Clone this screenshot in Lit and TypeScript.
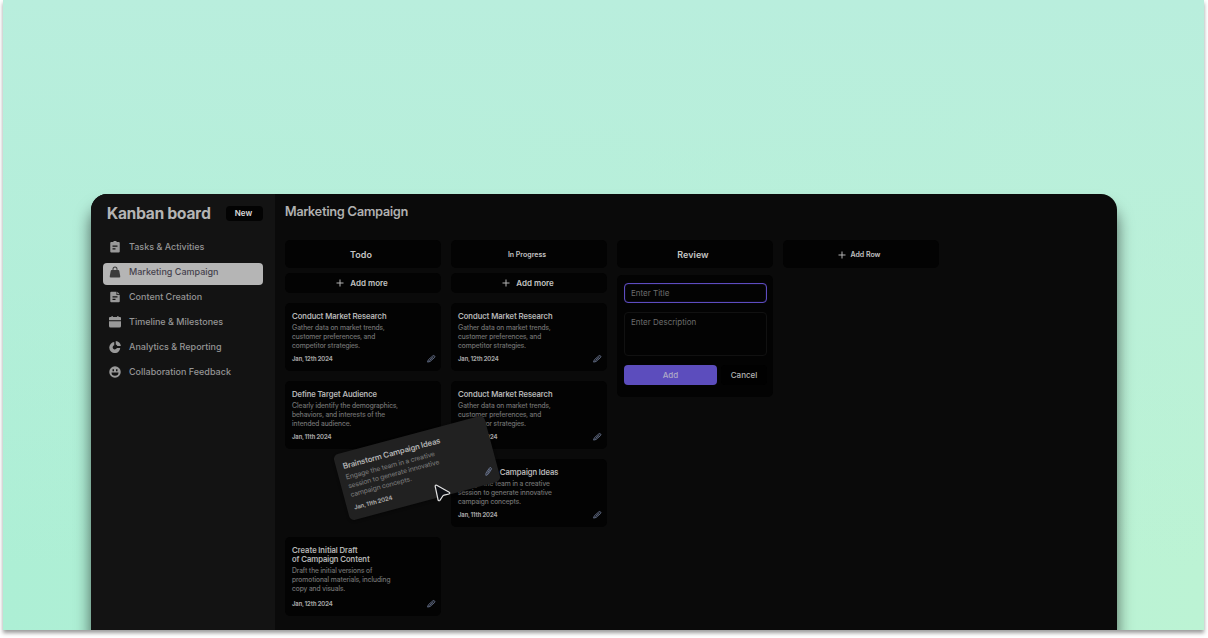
import { LitElement, html, css, svg, nothing } from "lit";
import { customElement, property } from "lit/decorators.js";

type Card = { title: string[]; body: string[]; date: string; edit?: boolean; tall?: boolean };

const research: Card = {
  title: ["Conduct Market Research"],
  body: ["Gather data on market trends,", "customer preferences, and", "competitor strategies."],
  date: "Jan, 12th 2024",
  edit: true,
};
const audience: Card = {
  title: ["Define Target Audience"],
  body: ["Clearly identify the demographics,", "behaviors, and interests of the", "intended audience."],
  date: "Jan, 11th 2024",
};
const brainstorm: Card = {
  title: ["Brainstorm Campaign Ideas"],
  body: ["Engage the team in a creative", "session to generate innovative", "campaign concepts."],
  date: "Jan, 11th 2024",
  edit: true,
};
const draft: Card = {
  title: ["Create Initial Draft", "of Campaign Content"],
  body: ["Draft the initial versions of", "promotional materials, including", "copy and visuals."],
  date: "Jan, 12th 2024",
  edit: true,
  tall: true,
};

const icons = {
  tasks: svg`<path fill-rule="evenodd" d="M9 0h6v2h4.500a2 2 0 0 1 2 2v17a2 2 0 0 1-2 2h-15a2 2 0 0 1-2-2V4a2 2 0 0 1 2-2H9zM7 9v2.400h10V9zM7 14.500v2.400h6v-2.400z"/>`,
  bag: svg`<path fill-rule="evenodd" d="M7 8V6a5 5 0 0 1 10 0v2h1.500a2 2 0 0 1 2 1.600l2 11a2 2 0 0 1-2 2.400h-17a2 2 0 0 1-2-2.400l2-11A2 2 0 0 1 5.500 8zm2 0h6V6a3 3 0 0 0-6 0z"/>`,
  doc: svg`<path fill-rule="evenodd" d="M4.500 1.500H15V8h6.500v12.500a2 2 0 0 1-2 2h-15a2 2 0 0 1-2-2v-17a2 2 0 0 1 2-2zM7 10.500v2.300h10v-2.300zM7 15.500v2.300h6v-2.300zM16.500 1.500l5 5h-5z"/>`,
  calendar: svg`<path d="M5 0h2.500v2h9V0H19v2h3a2 2 0 0 1 2 2v4.500H0V4a2 2 0 0 1 2-2h3zM0 10.500h24V20a3 3 0 0 1-3 3H3a3 3 0 0 1-3-3z"/>`,
  pie: svg`<path d="M10.500 2.200V8.500a4.200 4.200 0 1 0 5 5.500h7A11 11 0 1 1 10.500 2.200zM13.500 0c5.500.3 9.700 4.500 10.200 10h-7A5 5 0 0 0 13.500 7z"/>`,
  smile: svg`<path fill-rule="evenodd" d="M12 .5a11.500 11.500 0 1 1 0 23 11.500 11.500 0 0 1 0-23zM7 6.500v4h3v-4zM14 6.500v4h3v-4zM5 13a7 6.500 0 0 0 14 0z"/>`,
};

const pencil = svg`<path d="M1.500 21.500l2-6L15.500 5a3.200 3.200 0 0 1 4.500 0 3.200 3.200 0 0 1 0 4.500L8 20zM6.500 17.500l11-10"/>`;

const plus = html`<svg class="plus" viewBox="0 0 8 8" aria-hidden="true"><path d="M4 .5v7M.5 4h7" /></svg>`;

@customElement("kanban-card")
class KanbanCard extends LitElement {
  @property({ attribute: false }) card!: Card;
  @property({ type: Boolean, reflect: true }) dragging = false;

  static styles = css`
    :host { display: block; }
    .card {
      box-sizing: border-box;
      display: flex;
      flex-direction: column;
      min-height: 68px;
      padding: 9px 7px 8px;
      border-radius: 5px;
      background: #030303;
      color: #b4b4b4;
    }
    .tall { min-height: 79px; }
    :host([dragging]) .card { background: #212121; box-shadow: 0 1px 3px #0006; }
    h3 { margin: 0; font-size: 8px; line-height: 9px; font-weight: 600; }
    p { margin: 2px 0 0; font-size: 7px; line-height: 9px; font-weight: 500; color: #727272; }
    span { display: block; white-space: nowrap; }
    .foot { display: flex; justify-content: space-between; align-items: center; margin-top: auto; height: 9px; }
    time { font-size: 6px; line-height: 8px; font-weight: 700; color: #a4a4a4; }
    button { display: flex; margin: 0 -2px 0 0; padding: 0; border: 0; background: none; }
    svg { width: 9px; height: 9px; fill: none; stroke: #69748f; stroke-width: 2.400; stroke-linejoin: round; }
  `;

  render() {
    const { title, body, date, edit, tall } = this.card;
    return html`<article class="card ${tall ? "tall" : ""}">
      <h3>${title.map((t) => html`<span>${t}</span>`)}</h3>
      <p>${body.map((t) => html`<span>${t}</span>`)}</p>
      <div class="foot">
        <time>${date}</time>
        ${edit ? html`<button aria-label="Edit"><svg viewBox="0 0 24 24">${pencil}</svg></button>` : nothing}
      </div>
    </article>`;
  }
}

@customElement("app-root")
class AppRoot extends LitElement {
  static styles = css`
    :host {
      display: flex;
      box-sizing: border-box;
      height: 100vh;
      padding: 0 4px 8px 3px;
      background: #fff;
      font-family: Inter, "Liberation Sans", sans-serif;
      overflow: hidden;
    }
    h1, h2, kanban-card { font-family: "Inter Display", Inter, sans-serif; }
    button, input, textarea { font-family: inherit; }
    .frame { flex: 1; display: flex; box-shadow: 0 3px 4px #0006; }
    .stage {
      flex: 1;
      display: flex;
      box-sizing: border-box;
      padding: 194px 87px 0 88px;
      overflow: hidden;
      background:
        linear-gradient(180deg, #b9eedd 0%, #b9eedd00 90%),
        linear-gradient(90deg, #adefd5 0%, #bcf3d4 100%);
    }
    .window {
      flex: 1;
      display: flex;
      border-radius: 16px 16px 0 0;
      background: #0a0a0a;
      box-shadow: 0 14px 16px #0009;
      overflow: hidden;
    }
    .sidebar { flex: 0 0 184px; box-sizing: border-box; padding: 9px 12px; background: #131313; }
    .brand { display: flex; align-items: center; justify-content: space-between; padding: 0 0 0 4px; }
    h1 { margin: 0; font-size: 16px; line-height: 20px; font-weight: 700; color: #b4b4b4; }
    .new {
      width: 37px; height: 15px; padding: 0 2px 0 0; border: 0; border-radius: 4px;
      background: #030303; color: #ddd; font-size: 8px; font-weight: 600;
    }
    nav { display: grid; gap: 3px; margin-top: 15px; }
    nav a {
      display: flex; align-items: center; gap: 8px; box-sizing: border-box; height: 22px;
      padding: 0 6px 4px; border-radius: 4px; color: #959595; text-decoration: none;
      font-size: 9px; line-height: 12px; font-weight: 500; white-space: nowrap;
    }
    nav a.active { background: #b5b5b5; color: #45424d; }
    nav svg { width: 12px; height: 12px; fill: #999; }
    nav .active svg { fill: #3c3c3c; }
    main { flex: 1; min-width: 0; padding: 9px 10px; }
    h2 { margin: 0; font-size: 13px; line-height: 17px; font-weight: 600; color: #b0b0b0; }
    .board { display: grid; grid-template-columns: repeat(4, 156px); gap: 10px; align-items: start; margin-top: 20px; }
    .head, .more {
      display: flex; align-items: center; justify-content: center; width: 100%; box-sizing: border-box;
      border: 0; border-radius: 5px; background: #030303; color: #c4c4c4; font-weight: 600;
    }
    .head { height: 28px; margin: 0; padding: 2px 4px 0 0; font-size: 9px; line-height: 12px; }
    .small { font-size: 7px; gap: 5px; }
    .more { height: 20px; margin: 5px 0 10px; padding: 0 2px 0 0; gap: 6px; font-size: 8px; }
    .plus { width: 8px; height: 8px; fill: none; stroke: #b4b4b4; stroke-width: 1; }
    .cards { display: grid; gap: 10px; }
    .slot { position: relative; height: 68px; }
    .dragged { position: absolute; z-index: 2; left: 54px; top: -25px; width: 156px; transform: rotate(-15deg); }
    .cursor {
      position: absolute; z-index: 3; left: 149px; top: 25px; width: 17px; height: 18px;
      fill: #0d0f14; stroke: #e2e2e2; stroke-width: 1.200; stroke-linejoin: round;
    }
    form {
      display: grid; grid-template-columns: 1fr 46px; gap: 9px 4px; margin-top: 7px;
      padding: 8px 6px 12px 7px; border-radius: 5px; background: #030303;
    }
    input, textarea {
      grid-column: 1 / -1; box-sizing: border-box; width: 100%; margin: 0; padding: 0 6px; outline: 0;
      border: 1px solid #111; border-radius: 4px; background: #030303; color: #ccc; font-size: 8px; line-height: 12px;
    }
    input { height: 20px; border-color: #5d4cc0; box-shadow: inset 0 0 1px #5d4cc0; }
    textarea { display: block; height: 44px; padding-top: 3px; resize: none; }
    ::placeholder { color: #6c6c6c; opacity: 1; }
    form button { height: 20px; padding: 0; border: 0; border-radius: 4px; background: #010101; color: #b4b4b4; font-size: 8px; font-weight: 500; }
    form .add { background: #5c4dbd; color: #aeaac8; }
  `;

  private nav = [
    ["Tasks & Activities", icons.tasks],
    ["Marketing Campaign", icons.bag],
    ["Content Creation", icons.doc],
    ["Timeline & Milestones", icons.calendar],
    ["Analytics & Reporting", icons.pie],
    ["Collaboration Feedback", icons.smile],
  ] as const;

  render() {
    const addMore = html`<button class="more">${plus}Add more</button>`;
    return html`<div class="frame"><div class="stage">
      <div class="window">
        <aside class="sidebar">
          <div class="brand"><h1>Kanban board</h1><button class="new">New</button></div>
          <nav>
            ${this.nav.map(
              ([label, icon], i) => html`<a href="#" class=${i === 1 ? "active" : ""}>
                <svg viewBox="0 0 24 24" aria-hidden="true">${icon}</svg>${label}</a>`
            )}
          </nav>
        </aside>
        <main>
          <h2>Marketing Campaign</h2>
          <div class="board">
            <section>
              <h3 class="head">Todo</h3>
              ${addMore}
              <div class="cards">
                <kanban-card .card=${research}></kanban-card>
                <kanban-card .card=${audience}></kanban-card>
                <div class="slot">
                  <kanban-card class="dragged" dragging .card=${brainstorm}></kanban-card>
                  <svg class="cursor" viewBox="0 0 17 18" aria-hidden="true">
                    <path d="M1.200 2.300c-.2-.9.700-1.500 1.500-1.100l12.500 7c.9.500.7 1.600-.2 1.800l-5 1.200c-.5.100-.9.400-1.200.8l-2.900 4.300c-.5.700-1.600.6-1.800-.3z" />
                  </svg>
                </div>
                <kanban-card .card=${draft}></kanban-card>
              </div>
            </section>
            <section>
              <h3 class="head small">In Progress</h3>
              ${addMore}
              <div class="cards">
                <kanban-card .card=${research}></kanban-card>
                <kanban-card .card=${{ ...research, date: "Jan, 11th 2024" }}></kanban-card>
                <kanban-card .card=${brainstorm}></kanban-card>
              </div>
            </section>
            <section>
              <h3 class="head">Review</h3>
              <form @submit=${(e: Event) => e.preventDefault()}>
                <input aria-label="Title" placeholder="Enter Title" />
                <textarea aria-label="Description" placeholder="Enter Description"></textarea>
                <button class="add">Add</button>
                <button type="button">Cancel</button>
              </form>
            </section>
            <section><button class="head small">${plus}Add Row</button></section>
          </div>
        </main>
      </div>
    </div></div>`;
  }
}
